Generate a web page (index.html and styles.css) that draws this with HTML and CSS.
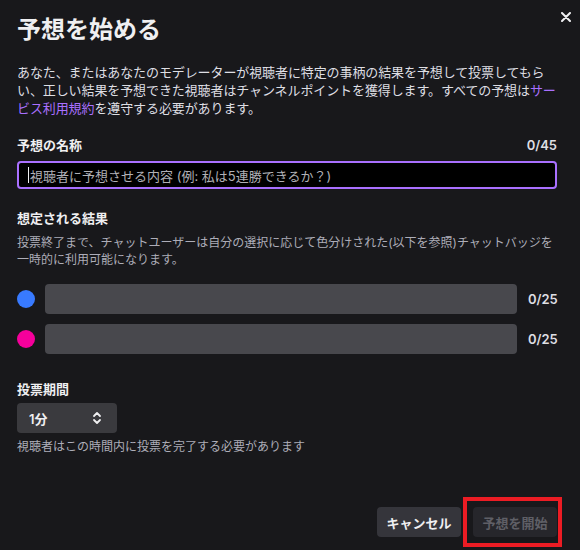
FILE: index.html
```html
<!DOCTYPE html>
<html lang="ja">
<head>
<meta charset="utf-8">
<link rel="stylesheet" href="styles.css">
</head>
<body>
<div class="dialog">
  <button class="close" aria-label="閉じる">
    <svg width="10" height="10" viewBox="0 0 10 10"><path d="M1 1L9 9M9 1L1 9" stroke="#efeff1" stroke-width="2" stroke-linecap="round"/></svg>
  </button>
  <h1 class="title">予想を始める</h1>
  <p class="intro">あなた、またはあなたのモデレーターが視聴者に特定の事柄の結果を予想して投票してもらい、正しい結果を予想できた視聴者はチャンネルポイントを獲得します。すべての予想は<a class="link">サービス利用規約</a>を遵守する必要があります。</p>

  <div class="label-row label-name">
    <span class="label">予想の名称</span>
    <span class="count">0/45</span>
  </div>
  <div class="name-input"><span class="caret"></span><span class="placeholder">視聴者に予想させる内容 (例: 私は5連勝できるか？)</span></div>

  <div class="label label-outcomes">想定される結果</div>
  <p class="desc">投票終了まで、チャットユーザーは自分の選択に応じて色分けされた(以下を参照)チャットバッジを一時的に利用可能になります。</p>

  <div class="outcomes">
    <div class="outcome">
      <span class="dot dot-blue"></span>
      <div class="outcome-input"></div>
      <span class="count">0/25</span>
    </div>
    <div class="outcome">
      <span class="dot dot-pink"></span>
      <div class="outcome-input"></div>
      <span class="count">0/25</span>
    </div>
  </div>

  <div class="label label-period">投票期間</div>
  <div class="select">
    <span>1分</span>
    <svg width="10" height="14" viewBox="0 0 10 14"><path d="M2 5L5 2L8 5M2 9L5 12L8 9" fill="none" stroke="#efeff1" stroke-width="1.8" stroke-linecap="round" stroke-linejoin="round"/></svg>
  </div>
  <p class="hint">視聴者はこの時間内に投票を完了する必要があります</p>

  <div class="footer">
    <button class="btn btn-cancel">キャンセル</button>
    <button class="btn btn-start">予想を開始</button>
    <span class="highlight"></span>
  </div>
</div>
</body>
</html>
```

FILE: styles.css
```css
html, body {
  margin: 0;
  padding: 0;
  background: #18181b;
}
body {
  font-family: Inter, "Noto Sans CJK JP", sans-serif;
  color: #efeff1;
  width: 580px;
  height: 550px;
  overflow: hidden;
}
.dialog {
  position: relative;
  box-sizing: border-box;
  height: 550px;
  padding: 15px 23px 13px 17px;
  display: flex;
  flex-direction: column;
}
.close {
  position: absolute;
  top: 10px;
  right: 7px;
  width: 14px;
  height: 14px;
  padding: 0;
  border: 0;
  background: none;
  display: flex;
  align-items: center;
  justify-content: center;
}
.title {
  margin: 0;
  font-size: 24px;
  line-height: 30px;
  font-weight: 700;
  color: #efeff1;
}
.intro {
  margin: 18px 0 0;
  font-size: 13px;
  line-height: 18px;
  color: #dedee3;
  letter-spacing: -0.1px;
}
.link {
  color: #a970ff;
}
.label-row {
  display: flex;
  justify-content: space-between;
  align-items: center;
}
.label-name {
  margin-top: 19px;
  line-height: 18px;
}
.label {
  font-size: 13px;
  font-weight: 700;
  line-height: 18px;
  color: #efeff1;
}
.count {
  font-size: 13px;
  font-weight: 600;
  color: #dedee3;
}
.name-input {
  margin-top: 7px;
  box-sizing: border-box;
  height: 28px;
  border: 2px solid #a970ff;
  border-radius: 4px;
  background: #000;
  display: flex;
  align-items: center;
  padding-left: 9px;
}
.caret {
  width: 1px;
  height: 16px;
  background: #efeff1;
  margin-right: 1px;
}
.placeholder {
  font-size: 13px;
  color: #b0b0b6;
}
.label-outcomes {
  margin-top: 20px;
}
.desc {
  margin: 7px 0 0;
  font-size: 12px;
  line-height: 17px;
  color: #adadb8;
}
.outcomes {
  margin-top: 16px;
  display: flex;
  flex-direction: column;
  gap: 10px;
}
.outcome {
  display: flex;
  align-items: center;
  height: 30px;
}
.dot {
  width: 18px;
  height: 18px;
  border-radius: 50%;
  flex: none;
}
.dot-blue { background: #387aff; }
.dot-pink { background: #f5009b; }
.outcome-input {
  margin-left: 10px;
  flex: 1;
  height: 30px;
  border-radius: 4px;
  background: #48484d;
}
.outcome .count {
  width: 29px;
  margin-left: 11px;
  text-align: right;
}
.label-period {
  margin-top: 26px;
}
.select {
  margin-top: 5px;
  box-sizing: border-box;
  width: 100px;
  height: 30px;
  border-radius: 4px;
  background: #3a3a3e;
  display: flex;
  align-items: center;
  justify-content: space-between;
  padding: 0 15px 0 12px;
  font-size: 13px;
  font-weight: 600;
}
.hint {
  margin: 5px 0 0;
  font-size: 12px;
  line-height: 17px;
  color: #adadb8;
}
.footer {
  margin-top: auto;
  position: relative;
  display: flex;
  justify-content: flex-end;
  gap: 12px;
}
.btn {
  width: 84px;
  height: 30px;
  border: 0;
  border-radius: 4px;
  font-family: inherit;
  font-size: 13px;
  font-weight: 700;
  padding: 0;
}
.btn-cancel {
  background: #35353b;
  color: #efeff1;
}
.btn-start {
  background: #26262b;
  color: #5f5f66;
}
.highlight {
  position: absolute;
  right: -5px;
  top: -10px;
  width: 91px;
  height: 42px;
  border: 4px solid #ec1c24;
}
```
